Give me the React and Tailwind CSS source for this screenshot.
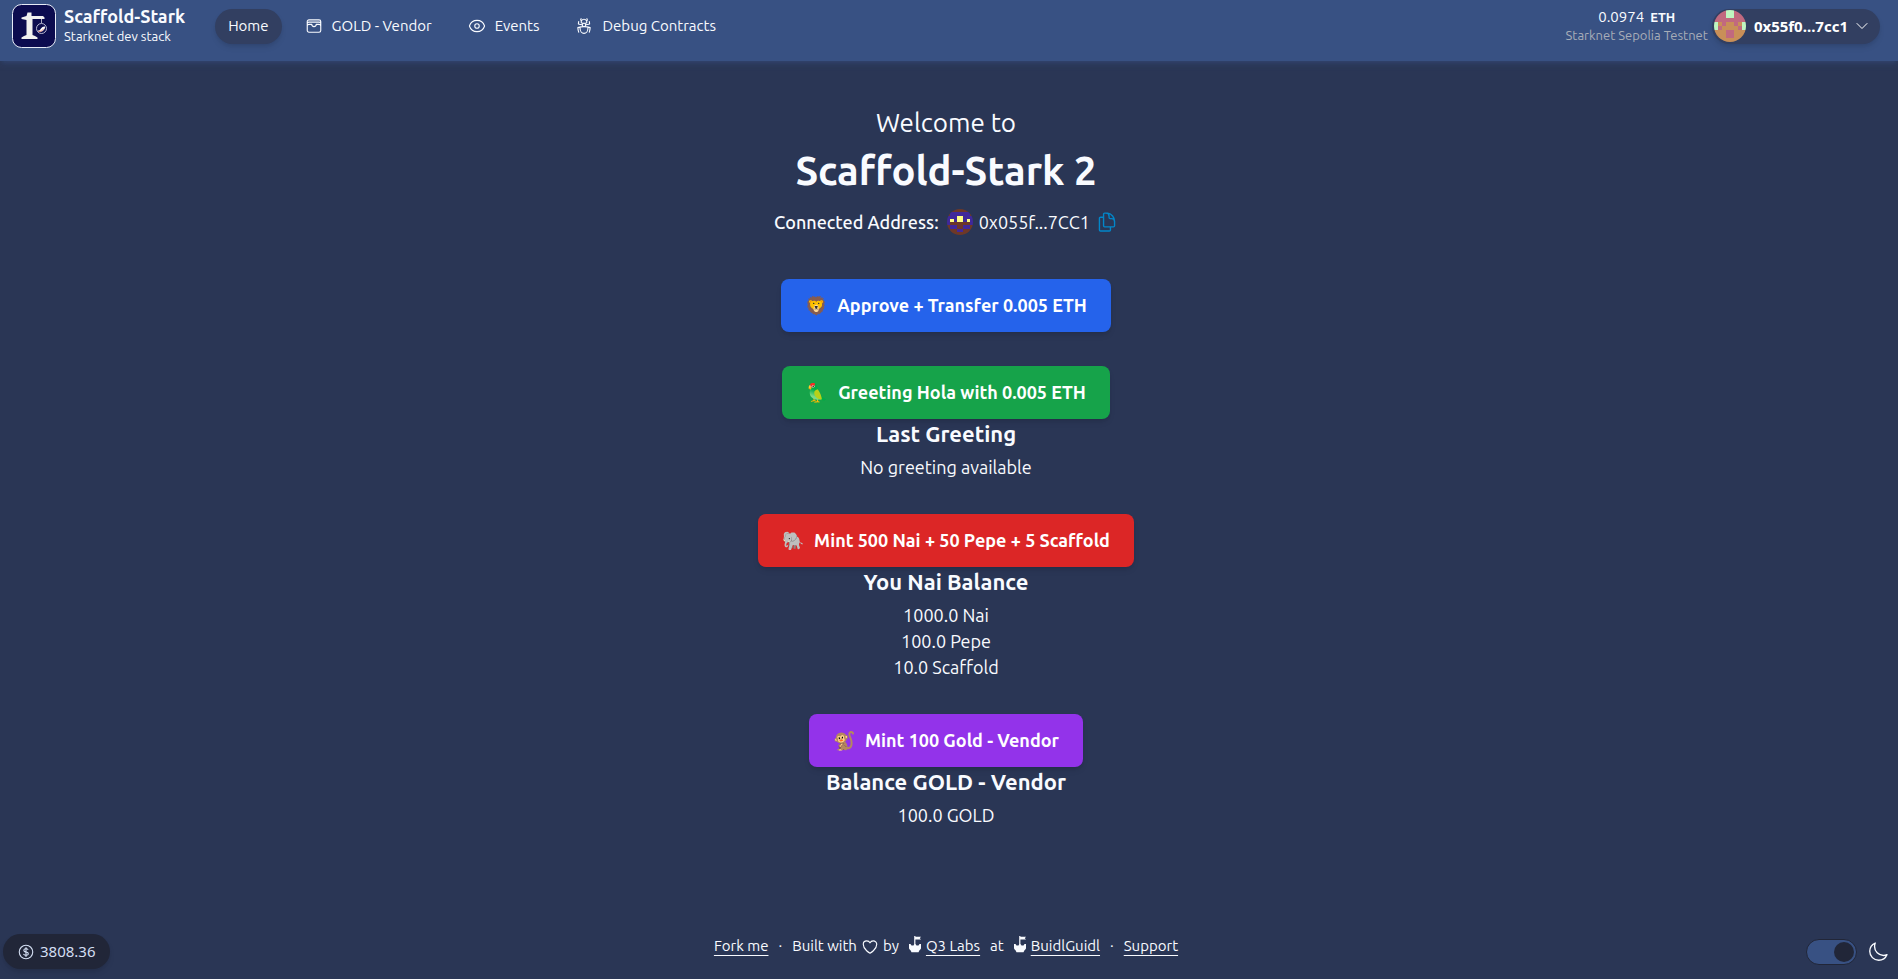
import { useState } from "react";
import {
  HiOutlineWallet,
  HiOutlineEye,
  HiOutlineBugAnt,
  HiOutlineDocumentDuplicate,
  HiOutlineHeart,
  HiOutlineMoon,
  HiOutlineCurrencyDollar,
  HiOutlineChevronDown,
} from "react-icons/hi2";

const navLinks = [
  { label: "Home", active: true },
  { label: "GOLD - Vendor", Icon: HiOutlineWallet },
  { label: "Events", Icon: HiOutlineEye },
  { label: "Debug Contracts", Icon: HiOutlineBugAnt },
];

const sections = [
  { emoji: "🦁", action: "Approve + Transfer 0.005 ETH", color: "bg-[#2563eb]", lines: [] },
  {
    emoji: "🦜",
    action: "Greeting Hola with 0.005 ETH",
    color: "bg-[#16a34a]",
    title: "Last Greeting",
    lines: ["No greeting available"],
  },
  {
    emoji: "🐘",
    action: "Mint 500 Nai + 50 Pepe + 5 Scaffold",
    color: "bg-[#dc2626]",
    title: "You Nai Balance",
    lines: ["1000.0 Nai", "100.0 Pepe", "10.0 Scaffold"],
  },
  {
    emoji: "🐒",
    action: "Mint 100 Gold - Vendor",
    color: "bg-[#9333ea]",
    title: "Balance GOLD - Vendor",
    lines: ["100.0 GOLD"],
  },
];

const walletBlockie = {
  colors: { a: "#c1697f", b: "#bff5c0", c: "#c98f58" },
  rows: ["aaabbaaa", "aaabbaaa", "aaaaaaaa", "bcaccacb", "baccccab", "cccaaccc", "cccaaccc", "cccccccc"],
};
const addressBlockie = {
  colors: { a: "#6d3828", b: "#40289a", c: "#fdfd86" },
  rows: ["aaaaaaaa", "abbbbbba", "bbbccbbb", "bcbccbcb", "baaaaaab", "abbaabba", "aaabbaaa", "aaaaaaaa"],
};

function Blockie({ data, className }) {
  return (
    <svg viewBox="0 0 8 8" shapeRendering="crispEdges" aria-hidden="true" className={className}>
      {data.rows.flatMap((row, y) =>
        [...row].map((c, x) => <rect key={`${x}-${y}`} x={x} y={y} width="1" height="1" fill={data.colors[c]} />),
      )}
    </svg>
  );
}

function Logo() {
  return (
    <svg viewBox="0 0 44 44" aria-hidden="true" className="size-11 shrink-0">
      <rect x="0.5" y="0.5" width="43" height="43" rx="9" fill="#0c0c4f" stroke="#e6ebf7" />
      <path
        d="M15.500 8.500h4V12H31l1.500 1.500V15H20.500v16l2.500 1 2.500 1.500V35H9.500v-1.500L12 32l2.500-1V16L9.500 15v-1.500l5-1.500z"
        fill="#f1f1ef"
      />
      <path d="M29.500 15v4" stroke="#f1f1ef" strokeWidth="0.700" />
      <circle cx="29.500" cy="24.500" r="5" fill="#0c0c4f" stroke="#c9cbe0" strokeWidth="0.900" />
      <path
        d="M25.500 26.500c2 .3 2.500-.5 3.500-2 1-1.300 2.400-2.200 4.200-1.800-.2 2.200-1.800 4.800-4.800 5-1.300.1-2.300-.4-2.900-1.200z"
        fill="#fff"
      />
      <path d="M26.500 27.500c2 .2 4-.6 5-2.600" stroke="#e8836f" strokeWidth="0.900" fill="none" />
    </svg>
  );
}

function CastleIcon() {
  return (
    <svg viewBox="0 0 12 22" aria-hidden="true" className="h-[22px] w-3" fill="currentColor">
      <path d="M5.200 0h1.200v.8H12L10.800 2.200l1.200 1.400H6.400V9H5.200z" />
      <path d="M0 8h1.500l1 1.500h2l.7-1.200h1.600l.7 1.200h2l1-1.500H12v4c0 1-.8 1.600-1.500 2.300l-1 2h-7l-1-2C.8 13.600 0 13 0 12z" />
    </svg>
  );
}

function FooterLink({ children }) {
  return (
    <a href="#" className="underline underline-offset-4">
      {children}
    </a>
  );
}

export default function App() {
  const [dark, setDark] = useState(true);

  return (
    <div className="flex min-h-screen flex-col bg-[#2a3655] pr-[6px] font-[Ubuntu,'Noto_Sans',sans-serif] text-[#f9fbff]">
      <header className="-mr-[6px] flex items-start justify-between bg-[#385183] pt-1 pr-[18px] pb-[13px] pl-3 shadow-md shadow-[#385183]/40">
        <div className="flex items-center gap-[30px]">
          <a href="#" className="flex items-center gap-2">
            <Logo />
            <span className="flex flex-col">
              <span className="text-[18px] leading-[20px] font-bold">Scaffold-Stark</span>
              <span className="text-[13px] leading-[20px]">Starknet dev stack</span>
            </span>
          </a>
          <nav className="flex items-center gap-[10px]">
            {navLinks.map(({ label, Icon, active }) => (
              <a
                key={label}
                href="#"
                className={`flex h-[35px] items-center gap-[9px] rounded-full px-[13px] text-[15px] ${
                  active ? "bg-[#323f61] shadow-md" : ""
                }`}
              >
                {Icon && <Icon className="size-[18px]" />}
                {label}
              </a>
            ))}
          </nav>
        </div>
        <div className="flex h-11 items-center gap-1">
          <div className="flex flex-col items-center">
            <span className="flex items-center gap-[6px] text-[15px] leading-[18px]">
              0.0974 <span className="text-[13px] font-bold">ETH</span>
            </span>
            <span className="text-[13px] leading-[18px] text-[#a7adb8]">Starknet Sepolia Testnet</span>
          </div>
          <button
            type="button"
            className="flex h-[35px] items-center rounded-full bg-[#323f61] pr-[10px] pl-[2px] font-['Noto_Sans',sans-serif] text-[15px] font-bold text-white shadow-md"
          >
            <Blockie data={walletBlockie} className="size-8 rounded-full" />
            <span className="mr-[6px] ml-2">0x55f0...7cc1</span>
            <HiOutlineChevronDown className="size-4" />
          </button>
        </div>
      </header>

      <main className="flex grow flex-col items-center pt-11 text-center">
        <h1>
          <span className="mb-[9px] block text-[26px] leading-[35px]">Welcome to</span>
          <span className="block text-[40px] leading-[44px] font-bold">Scaffold-Stark 2</span>
        </h1>
        <div className="mt-4 flex h-[26px] items-center text-[18px]">
          <span className="font-medium">Connected Address:</span>
          <Blockie data={addressBlockie} className="mr-[6px] ml-2 size-[26px] rounded-full" />
          <span>0x055f...7CC1</span>
          <button type="button" aria-label="Copy address" className="ml-[6px] text-[#0286c9]">
            <HiOutlineDocumentDuplicate className="size-[22px]" />
          </button>
        </div>

        <div className="mt-11 flex flex-col items-center gap-[34px]">
          {sections.map(({ emoji, action, color, title, lines }) => (
            <section key={action} className="flex flex-col items-center">
              <button
                type="button"
                className={`flex h-[53px] items-center gap-[10px] rounded-lg px-6 text-[18px] font-bold text-white shadow-md ${color}`}
              >
                <span>{emoji}</span>
                {action}
              </button>
              {title && <h2 className="mb-[5px] text-[22px] leading-[30px] font-bold">{title}</h2>}
              {lines.map((line) => (
                <p key={line} className="text-[18px] leading-[26px]">
                  {line}
                </p>
              ))}
            </section>
          ))}
        </div>
      </main>

      <footer className="grid grid-cols-[1fr_auto_1fr] items-center pb-[10px]">
        <div className="ml-[3px] flex h-[35px] items-center gap-[5px] justify-self-start rounded-full bg-[#212638] px-[14px] font-['Noto_Sans',sans-serif] text-[15px] text-[#d3def2] shadow-md">
          <HiOutlineCurrencyDollar className="size-[18px]" />
          3808.36
        </div>
        <div className="flex items-center gap-[10px] pb-[10px] text-[15px]">
          <FooterLink>Fork me</FooterLink>
          <span>·</span>
          <span className="flex items-center gap-1">
            Built with <HiOutlineHeart className="size-[18px]" /> by
          </span>
          <span className="flex items-center gap-[5px]">
            <CastleIcon />
            <FooterLink>Q3 Labs</FooterLink>
          </span>
          <span>at</span>
          <span className="flex items-center gap-[5px]">
            <CastleIcon />
            <FooterLink>BuidlGuidl</FooterLink>
          </span>
          <span>·</span>
          <FooterLink>Support</FooterLink>
        </div>
        <div className="flex items-center gap-[10px] justify-self-end pr-[3px]">
          <input
            id="theme-toggle"
            type="checkbox"
            checked={dark}
            onChange={(e) => setDark(e.target.checked)}
            className="flex h-[26px] w-[51px] appearance-none items-center rounded-full border border-[#212638] bg-[#385183] px-[2px] before:size-5 before:rounded-full before:bg-[#212638] before:content-[''] checked:justify-end"
          />
          <label htmlFor="theme-toggle" aria-label="Dark theme">
            <HiOutlineMoon className="size-[22px]" />
          </label>
        </div>
      </footer>
    </div>
  );
}
